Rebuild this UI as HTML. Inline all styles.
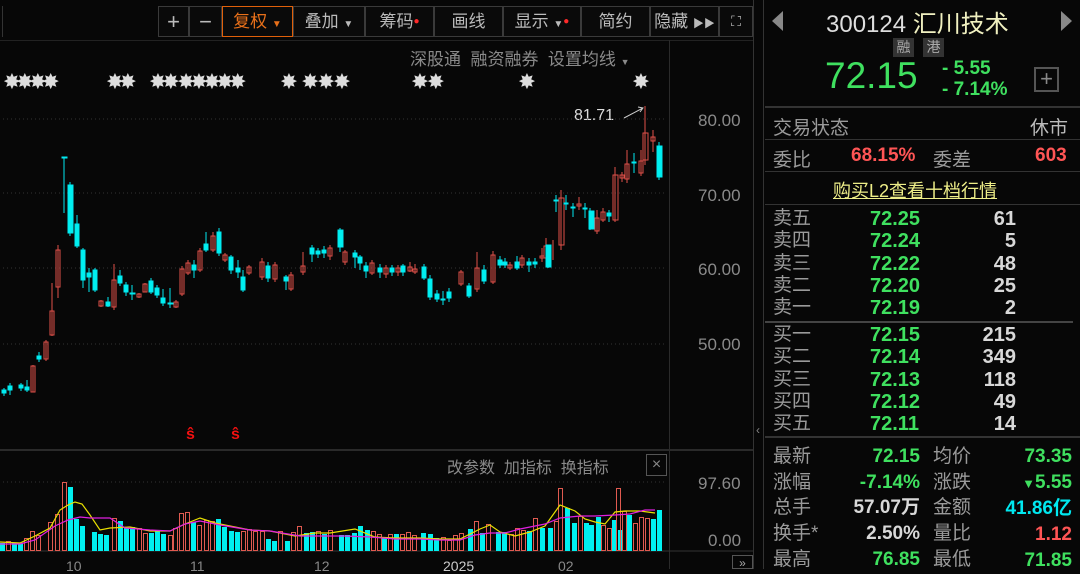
<!DOCTYPE html>
<html><head><meta charset="utf-8"><style>
*{margin:0;padding:0;box-sizing:border-box}
body{width:1080px;height:569px;background:#070707;overflow:hidden;position:relative;font-family:"Liberation Sans","Noto Sans CJK SC",sans-serif;color:#9a9a9a}
.a{position:absolute;white-space:nowrap}
.btn{position:absolute;top:6px;height:31px;border:1px solid #3a3a3a;color:#bbb;font-size:17px;line-height:29px;text-align:center;background:#0a0a0a}
.g{color:#3fe05f}.r{color:#ff5555}.w{color:#d8d8d8}
.rp{font-size:19px}
.st{position:absolute;top:71px;font-size:19px;color:#ddd;letter-spacing:-3px;font-weight:bold}
</style></head><body>
<div class="btn" style="left:158px;width:31px;font-size:22px">+</div>
<div class="btn" style="left:189px;width:33px;font-size:22px">−</div>
<div class="btn" style="left:222px;width:71px;border-color:#e0600a;color:#e8701a">复权 <span style="font-size:10px">▼</span></div>
<div class="btn" style="left:293px;width:72px">叠加 <span style="font-size:10px">▼</span></div>
<div class="btn" style="left:365px;width:69px">筹码<span style="color:#ff2a2a;font-size:10px;vertical-align:top">●</span></div>
<div class="btn" style="left:434px;width:69px">画线</div>
<div class="btn" style="left:503px;width:78px">显示 <span style="font-size:10px">▼</span><span style="color:#ff2a2a;font-size:10px;vertical-align:top">●</span></div>
<div class="btn" style="left:581px;width:69px">简约</div>
<div class="btn" style="left:650px;width:69px">隐藏 <span style="font-size:11px">▶▶</span></div>
<div class="btn" style="left:719px;width:34px;font-size:14px">⛶</div>
<div class="a" style="left:0;top:6px;width:3px;height:31px;border-right:1px solid #333"></div>
<div class="a" style="left:410px;top:45px;font-size:17px;color:#8a8a8a">深股通 &nbsp;融资融券 &nbsp;设置均线 <span style="font-size:9px">▼</span></div>
<div class="a" style="left:0;top:40px;width:753px;border-top:1px solid #222"></div>
<div class="st" style="left:4px">✸✸✸✸</div>
<div class="st" style="left:107px">✸✸</div>
<div class="st" style="left:150px">✸✸ ✸✸✸✸✸</div>
<div class="st" style="left:281px;letter-spacing:0">✸ ✸✸✸</div>
<div class="st" style="left:412px;letter-spacing:0">✸✸</div>
<div class="st" style="left:519px">✸</div>
<div class="st" style="left:633px">✸</div>
<div class="a" style="left:669px;top:40px;height:529px;border-left:1px solid #2a2a2a"></div>
<div class="a" style="left:753px;top:0;height:569px;border-left:1px solid #333"></div>
<div class="a" style="left:763px;top:0;height:569px;border-left:1px solid #333"></div>
<div class="a" style="left:0;top:449px;width:753px;border-top:2px solid #2a2a2a"></div>
<div class="a" style="left:698px;top:111px;font-size:17px;color:#8a8a8a">80.00</div>
<div class="a" style="left:698px;top:186px;font-size:17px;color:#8a8a8a">70.00</div>
<div class="a" style="left:698px;top:260px;font-size:17px;color:#8a8a8a">60.00</div>
<div class="a" style="left:698px;top:335px;font-size:17px;color:#8a8a8a">50.00</div>
<div class="a" style="left:698px;top:474px;font-size:17px;color:#8a8a8a">97.60</div>
<div class="a" style="left:708px;top:531px;font-size:17px;color:#8a8a8a">0.00</div>
<div class="a" style="left:574px;top:107px;font-size:16px;color:#ddd">81.71</div>
<div class="a" style="left:447px;top:454px;font-size:16px;color:#8a8a8a">改参数 &nbsp;加指标 &nbsp;换指标</div>
<div class="a" style="left:646px;top:454px;width:21px;height:22px;border:1px solid #555;color:#888;font-size:16px;text-align:center;line-height:20px">×</div>
<div class="a" style="left:732px;top:555px;width:21px;height:14px;border:1px solid #555;color:#aaa;font-size:12px;text-align:center">»</div>
<div class="a" style="left:66px;top:558px;font-size:14px;color:#888">10</div>
<div class="a" style="left:190px;top:558px;font-size:14px;color:#888">11</div>
<div class="a" style="left:314px;top:558px;font-size:14px;color:#888">12</div>
<div class="a" style="left:443px;top:558px;font-size:14px;color:#ccc">2025</div>
<div class="a" style="left:558px;top:558px;font-size:14px;color:#888">02</div>
<div class="a" style="left:186px;top:426px;font-size:16px;font-weight:bold;color:#f01010">ŝ</div>
<div class="a" style="left:231px;top:426px;font-size:16px;font-weight:bold;color:#f01010">ŝ</div>
<svg class="a" style="left:0;top:0" width="753" height="569">
<g stroke="#333" stroke-dasharray="1 3">
<line x1="3" y1="119" x2="665" y2="119"/><line x1="3" y1="193" x2="665" y2="193"/><line x1="3" y1="268" x2="665" y2="268"/><line x1="3" y1="344" x2="665" y2="344"/><line x1="3" y1="482" x2="665" y2="482"/>
</g>
<line x1="0" y1="551" x2="753" y2="551" stroke="#333"/>
<path d="M624 118 L643 108 M638 107 L643 108 L640 112" stroke="#ccc" fill="none"/>
<g stroke="#e0504a" fill="none" stroke-width="1">
<path d="M33 392V365M46 340V361M52 283V336M58 245V298M101 300V307M114 264V310M139 293V298M145 283V292M176 300V308M182 266V296M188 260V275M200 248V272M213 232V252M225 253V262M249 265V275M262 258V280M275 262V282M291 272V291M303 252V275M330 245V260M345 250V265M372 260V275M386 265V278M398 265V276M410 262V272M415 264V274M461 270V286M477 252V292M493 251V284M510 262V270M522 255V268M542 248V262M546 238V260M553 240V260M561 190V250M579 197V210M597 210V234M603 208V222M615 167V222M622 172V182M627 150V183M641 150V176M645 106V165M653 130V152"/>
<rect x="31" y="366" width="4" height="26"/><rect x="44" y="342" width="4" height="17"/><rect x="50" y="311" width="4" height="24"/><rect x="56" y="250" width="4" height="37"/><rect x="99" y="301" width="4" height="5"/><rect x="112" y="280" width="4" height="27"/><rect x="137" y="294" width="4" height="3"/><rect x="143" y="284" width="4" height="8"/><rect x="174" y="302" width="4" height="5"/><rect x="180" y="269" width="4" height="25"/><rect x="186" y="263" width="4" height="10"/><rect x="198" y="251" width="4" height="19"/><rect x="211" y="236" width="4" height="14"/><rect x="223" y="255" width="4" height="5"/><rect x="247" y="267" width="4" height="6"/><rect x="260" y="262" width="4" height="15"/><rect x="273" y="265" width="4" height="14"/><rect x="289" y="275" width="4" height="14"/><rect x="301" y="266" width="4" height="6"/><rect x="328" y="248" width="4" height="8"/><rect x="343" y="252" width="4" height="10"/><rect x="370" y="263" width="4" height="10"/><rect x="384" y="268" width="4" height="6"/><rect x="396" y="268" width="4" height="4"/><rect x="408" y="267" width="4" height="4"/><rect x="413" y="269" width="4" height="3"/><rect x="459" y="272" width="4" height="12"/><rect x="475" y="268" width="4" height="21"/><rect x="491" y="255" width="4" height="27"/><rect x="508" y="265" width="4" height="3"/><rect x="520" y="258" width="4" height="7"/><rect x="540" y="256" width="4" height="2"/><rect x="544" y="246" width="4" height="12"/><rect x="559" y="198" width="5" height="47"/><rect x="577" y="204" width="4" height="2"/><rect x="595" y="218" width="4" height="13"/><rect x="601" y="212" width="4" height="8"/><rect x="613" y="175" width="5" height="45"/><rect x="620" y="175" width="4" height="3"/><rect x="625" y="164" width="4" height="15"/><rect x="639" y="161" width="4" height="12"/><rect x="643" y="133" width="5" height="27"/><rect x="651" y="137" width="4" height="4"/>
</g>
<g stroke="#00e8f0" fill="#00f0f0">
<path d="M4 388V396M10 383V395M21 383V391M27 380V392M39 352V362M64 157V213M70 182V236M77 215V248M83 248V288M89 268V292M95 268V292M108 297V307M120 270V286M126 282V296M132 285V300M151 278V294M157 285V298M163 289V306M170 288V308M194 260V278M206 232V252M219 228V256M231 255V274M238 260V278M243 270V292M268 262V282M286 275V290M312 245V262M318 248V258M324 246V258M340 228V252M355 250V268M360 255V270M366 262V278M380 264V278M392 265V276M403 264V276M424 264V280M430 275V300M437 290V302M443 291V305M449 288V302M469 283V298M484 265V284M500 256V268M505 258V268M517 256V270M529 258V272M535 258V268M548 245V268M556 195V212M566 195V210M573 203V217M585 203V218M590 208V230M609 210V222M634 153V173M659 142V180"/>
<rect x="2" y="390" width="4" height="3"/><rect x="8" y="386" width="4" height="4"/><rect x="19" y="385" width="4" height="3"/><rect x="25" y="387" width="4" height="3"/><rect x="37" y="356" width="4" height="3"/><rect x="62" y="157" width="5" height="1"/><rect x="68" y="185" width="5" height="48"/><rect x="75" y="224" width="4" height="22"/><rect x="81" y="250" width="4" height="30"/><rect x="87" y="273" width="4" height="4"/><rect x="93" y="270" width="4" height="20"/><rect x="106" y="302" width="4" height="4"/><rect x="118" y="276" width="4" height="7"/><rect x="124" y="285" width="4" height="7"/><rect x="130" y="293" width="5" height="1"/><rect x="149" y="281" width="4" height="11"/><rect x="155" y="288" width="4" height="7"/><rect x="161" y="298" width="4" height="5"/><rect x="168" y="303" width="5" height="1"/><rect x="192" y="265" width="4" height="5"/><rect x="204" y="244" width="4" height="6"/><rect x="217" y="232" width="4" height="21"/><rect x="229" y="257" width="4" height="13"/><rect x="236" y="268" width="4" height="4"/><rect x="241" y="277" width="4" height="13"/><rect x="266" y="266" width="4" height="12"/><rect x="284" y="277" width="4" height="4"/><rect x="310" y="248" width="4" height="6"/><rect x="316" y="251" width="4" height="3"/><rect x="322" y="250" width="4" height="3"/><rect x="338" y="230" width="5" height="17"/><rect x="353" y="253" width="4" height="4"/><rect x="358" y="257" width="4" height="6"/><rect x="364" y="266" width="4" height="5"/><rect x="378" y="268" width="4" height="4"/><rect x="390" y="268" width="4" height="4"/><rect x="401" y="266" width="4" height="6"/><rect x="422" y="267" width="4" height="11"/><rect x="428" y="279" width="4" height="18"/><rect x="435" y="294" width="4" height="5"/><rect x="441" y="299" width="4" height="1"/><rect x="447" y="292" width="4" height="6"/><rect x="467" y="286" width="4" height="10"/><rect x="482" y="270" width="4" height="11"/><rect x="498" y="260" width="4" height="5"/><rect x="503" y="262" width="4" height="3"/><rect x="515" y="262" width="4" height="6"/><rect x="527" y="262" width="4" height="3"/><rect x="533" y="262" width="4" height="2"/><rect x="546" y="245" width="5" height="22"/><rect x="554" y="200" width="4" height="1"/><rect x="564" y="203" width="4" height="1"/><rect x="571" y="207" width="4" height="1"/><rect x="583" y="208" width="4" height="1"/><rect x="589" y="211" width="5" height="18"/><rect x="607" y="213" width="4" height="3"/><rect x="632" y="162" width="4" height="1"/><rect x="657" y="146" width="5" height="31"/>
</g>
<g fill="#00f0f0">
<rect x="0" y="543" width="5" height="8"/><rect x="12" y="543" width="5" height="8"/><rect x="18" y="543" width="5" height="8"/><rect x="68" y="487" width="5" height="64"/><rect x="74" y="519" width="5" height="32"/><rect x="80" y="526" width="5" height="25"/><rect x="92" y="532" width="5" height="19"/><rect x="98" y="534" width="5" height="17"/><rect x="104" y="535" width="5" height="16"/><rect x="118" y="521" width="5" height="30"/><rect x="124" y="528" width="5" height="23"/><rect x="130" y="527" width="5" height="24"/><rect x="149" y="533" width="5" height="18"/><rect x="155" y="531" width="5" height="20"/><rect x="161" y="534" width="5" height="17"/><rect x="191" y="522" width="5" height="29"/><rect x="216" y="519" width="5" height="32"/><rect x="222" y="527" width="5" height="24"/><rect x="229" y="531" width="5" height="20"/><rect x="235" y="532" width="5" height="19"/><rect x="266" y="539" width="5" height="12"/><rect x="272" y="541" width="5" height="10"/><rect x="285" y="541" width="5" height="10"/><rect x="304" y="533" width="5" height="18"/><rect x="310" y="532" width="5" height="19"/><rect x="322" y="534" width="5" height="17"/><rect x="339" y="535" width="5" height="16"/><rect x="345" y="535" width="5" height="16"/><rect x="352" y="533" width="5" height="18"/><rect x="358" y="526" width="5" height="25"/><rect x="365" y="530" width="5" height="21"/><rect x="382" y="538" width="5" height="13"/><rect x="394" y="534" width="5" height="17"/><rect x="421" y="533" width="5" height="18"/><rect x="428" y="534" width="5" height="17"/><rect x="434" y="538" width="5" height="13"/><rect x="468" y="529" width="5" height="22"/><rect x="480" y="533" width="5" height="18"/><rect x="496" y="532" width="5" height="19"/><rect x="502" y="532" width="5" height="19"/><rect x="527" y="531" width="5" height="20"/><rect x="540" y="528" width="5" height="23"/><rect x="548" y="528" width="5" height="23"/><rect x="565" y="508" width="5" height="43"/><rect x="572" y="523" width="5" height="28"/><rect x="584" y="523" width="5" height="28"/><rect x="589" y="525" width="5" height="26"/><rect x="596" y="517" width="5" height="34"/><rect x="612" y="520" width="5" height="31"/><rect x="618" y="530" width="5" height="21"/><rect x="627" y="515" width="5" height="36"/><rect x="651" y="519" width="5" height="32"/><rect x="657" y="510" width="5" height="41"/>
</g>
<g fill="none" stroke="#e05a50">
<rect x="6.5" y="541.5" width="4" height="9"/><rect x="24.5" y="538.5" width="4" height="12"/><rect x="30.5" y="531.5" width="4" height="19"/><rect x="36.5" y="535.5" width="4" height="15"/><rect x="48.5" y="522.5" width="4" height="28"/><rect x="55.5" y="514.5" width="4" height="36"/><rect x="62.5" y="482.5" width="4" height="68"/><rect x="112.5" y="518.5" width="4" height="32"/><rect x="137.5" y="528.5" width="4" height="22"/><rect x="143.5" y="533.5" width="4" height="17"/><rect x="168.5" y="535.5" width="4" height="15"/><rect x="173.5" y="528.5" width="4" height="22"/><rect x="179.5" y="513.5" width="4" height="37"/><rect x="185.5" y="512.5" width="4" height="38"/><rect x="197.5" y="525.5" width="4" height="25"/><rect x="204.5" y="520.5" width="4" height="30"/><rect x="210.5" y="521.5" width="4" height="29"/><rect x="241.5" y="531.5" width="4" height="19"/><rect x="247.5" y="529.5" width="4" height="21"/><rect x="253.5" y="531.5" width="4" height="19"/><rect x="260.5" y="531.5" width="4" height="19"/><rect x="278.5" y="531.5" width="4" height="19"/><rect x="291.5" y="532.5" width="4" height="18"/><rect x="297.5" y="526.5" width="4" height="24"/><rect x="316.5" y="531.5" width="4" height="19"/><rect x="328.5" y="530.5" width="4" height="20"/><rect x="371.5" y="531.5" width="4" height="19"/><rect x="377.5" y="534.5" width="4" height="16"/><rect x="388.5" y="534.5" width="4" height="16"/><rect x="400.5" y="534.5" width="4" height="16"/><rect x="406.5" y="532.5" width="4" height="18"/><rect x="412.5" y="535.5" width="4" height="15"/><rect x="441.5" y="537.5" width="4" height="13"/><rect x="447.5" y="540.5" width="4" height="10"/><rect x="453.5" y="535.5" width="4" height="15"/><rect x="459.5" y="533.5" width="4" height="17"/><rect x="474.5" y="521.5" width="4" height="29"/><rect x="486.5" y="524.5" width="4" height="26"/><rect x="509.5" y="534.5" width="4" height="16"/><rect x="515.5" y="528.5" width="4" height="22"/><rect x="521.5" y="530.5" width="4" height="20"/><rect x="533.5" y="518.5" width="4" height="32"/><rect x="554.5" y="521.5" width="4" height="29"/><rect x="558.5" y="488.5" width="4" height="62"/><rect x="578.5" y="516.5" width="4" height="34"/><rect x="601.5" y="525.5" width="4" height="25"/><rect x="607.5" y="528.5" width="4" height="22"/><rect x="616.5" y="488.5" width="4" height="62"/><rect x="633.5" y="523.5" width="4" height="27"/><rect x="639.5" y="517.5" width="4" height="33"/><rect x="645.5" y="518.5" width="4" height="32"/><rect x="622.5" y="511.5" width="4" height="39"/>
</g>
<polyline fill="none" stroke="#e8e000" stroke-width="1.2" points="0,542 20,543 35,536 50,528 60,510 68,505 75,502 82,504 90,515 100,530 110,528 130,527 150,531 170,531 185,524 200,518 215,523 230,526 250,530 270,531 295,536 315,533 330,533 355,529 375,537 395,538 420,538 440,539 460,539 470,534 480,529 490,525 500,532 515,536 530,532 545,526 555,512 560,505 575,511 585,519 595,522 605,524 615,512 625,511 640,511 655,513"/>
<polyline fill="none" stroke="#e020e0" stroke-width="1.2" points="0,544 20,544 35,540 55,526 68,520 80,517 90,518 110,518 125,528 150,530 170,531 185,524 200,521 220,525 250,530 270,531 300,536 325,536 345,536 370,537 395,539 420,539 440,540 460,540 475,535 490,533 505,533 520,529 545,524 560,518 580,516 595,516 615,515 630,514 645,510 655,510"/>
</svg>
<div class="a" style="left:772px;top:11px;width:0;height:0;border-top:10px solid transparent;border-bottom:10px solid transparent;border-right:11px solid #888"></div>
<div class="a" style="left:1061px;top:11px;width:0;height:0;border-top:10px solid transparent;border-bottom:10px solid transparent;border-left:11px solid #888"></div>
<div class="a w" style="left:826px;top:4px;font-size:24px;color:#ddd">300124 <span style="color:#f0f0c0">汇川技术</span></div>
<div class="a" style="left:893px;top:38px;width:21px;height:19px;background:#333;color:#aaa;font-size:14px;text-align:center;line-height:19px">融</div>
<div class="a" style="left:923px;top:38px;width:21px;height:19px;background:#333;color:#aaa;font-size:14px;text-align:center;line-height:19px">港</div>
<div class="a g" style="left:825px;top:55px;font-size:37px">72.15</div>
<div class="a g" style="left:942px;top:58px;font-size:19px;line-height:21px;font-weight:bold">-&nbsp;5.55<br>-&nbsp;7.14%</div>
<div class="a" style="left:1034px;top:67px;width:25px;height:25px;border:2px solid #555;color:#888;font-size:22px;text-align:center;line-height:20px">+</div>
<div class="a" style="left:765px;top:106px;width:315px;border-top:2px solid #333"></div>
<div class="a" style="left:765px;top:139px;width:315px;border-top:1px solid #333"></div>
<div class="a" style="left:765px;top:171px;width:315px;border-top:1px solid #333"></div>
<div class="a" style="left:765px;top:204px;width:315px;border-top:1px solid #333"></div>
<div class="a" style="left:765px;top:321px;width:308px;border-top:2px solid #444"></div>
<div class="a" style="left:765px;top:436px;width:315px;border-top:2px solid #333"></div>
<div class="a rp" style="left:773px;top:113px">交易状态</div>
<div class="a rp" style="left:1030px;top:113px;color:#bbb">休市</div>
<div class="a rp" style="left:773px;top:145px">委比</div>
<div class="a rp r" style="left:851px;top:145px;font-weight:bold">68.15%</div>
<div class="a rp" style="left:933px;top:145px">委差</div>
<div class="a rp r" style="left:1035px;top:145px;font-weight:bold">603</div>
<div class="a" style="left:833px;top:177px;font-size:18px;color:#eeee88;text-decoration:underline">购买L2查看十档行情</div>
<div class="a rp" style="left:773px;top:208px;line-height:22.3px">卖五<br>卖四<br>卖三<br>卖二<br>卖一</div>
<div class="a rp g" style="left:870px;top:208px;line-height:22.3px;font-weight:bold;font-size:20px">72.25<br>72.24<br>72.22<br>72.20<br>72.19</div>
<div class="a rp w" style="left:975px;top:208px;width:41px;text-align:right;line-height:22.3px;font-weight:bold;font-size:20px">61<br>5<br>48<br>25<br>2</div>
<div class="a rp" style="left:773px;top:324px;line-height:22.3px">买一<br>买二<br>买三<br>买四<br>买五</div>
<div class="a rp g" style="left:870px;top:324px;line-height:22.3px;font-weight:bold;font-size:20px">72.15<br>72.14<br>72.13<br>72.12<br>72.11</div>
<div class="a rp w" style="left:975px;top:324px;width:41px;text-align:right;line-height:22.3px;font-weight:bold;font-size:20px">215<br>349<br>118<br>49<br>14</div>
<div class="a rp" style="left:773px;top:444px;line-height:25.7px">最新<br>涨幅<br>总手<br>换手*<br>最高</div>
<div class="a rp" style="left:850px;top:444px;width:70px;text-align:right;line-height:25.7px;font-weight:bold"><span class="g">72.15</span><br><span class="g">-7.14%</span><br><span class="w">57.07万</span><br><span class="w">2.50%</span><br><span class="g">76.85</span></div>
<div class="a rp" style="left:933px;top:444px;line-height:25.7px">均价<br>涨跌<br>金额<br>量比<br>最低</div>
<div class="a rp" style="left:990px;top:444px;width:82px;text-align:right;line-height:25.7px;font-weight:bold"><span class="g">73.35</span><br><span class="g"><span style="font-size:13px">▼</span>5.55</span><br><span style="color:#00e8f0">41.86亿</span><br><span class="r">1.12</span><br><span class="g">71.85</span></div>
<div class="a" style="left:756px;top:423px;color:#888;font-size:12px">‹</div>
</body></html>
